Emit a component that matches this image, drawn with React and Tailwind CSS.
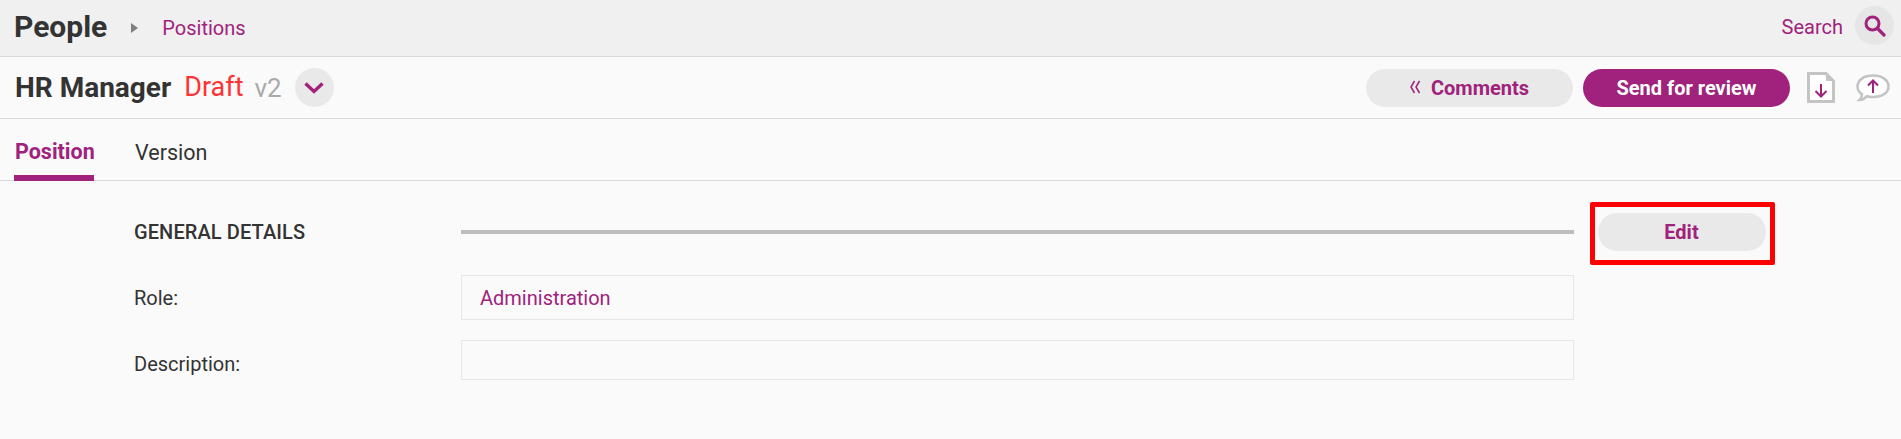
import React from "react";

const Chevron = () => (
  <svg width="20" height="12" viewBox="0 0 20 12" fill="none" stroke="#a0227c" strokeWidth="3.4">
    <path d="M1.5 1.5 L10 9.5 L18.5 1.5" />
  </svg>
);

const Search = () => (
  <svg width="22" height="22" viewBox="0 0 22 22" fill="none" stroke="#a0227c">
    <circle cx="8.5" cy="8.5" r="6.5" strokeWidth="3" />
    <path d="M13.5 13.5 L20 20" strokeWidth="3.2" strokeLinecap="round" />
  </svg>
);

const DoubleLeft = () => (
  <svg width="10" height="14" viewBox="0 0 10 14" fill="none" stroke="#a0227c" strokeWidth="1.5">
    <path d="M4.5 1 L1 7 L4.5 13 M9.5 1 L6 7 L9.5 13" />
  </svg>
);

const DocDown = () => (
  <svg width="28" height="31" viewBox="0 0 28 31" fill="none">
    <path d="M1.5 1.5 H19 L26.5 9 V29.5 H1.5 Z" fill="#fff" stroke="#c4c4c4" strokeWidth="3" />
    <path d="M19 1.5 V9 H26.5 Z" fill="#c4c4c4" />
    <path d="M14 12 V24 M8.5 19 L14 24.5 L19.5 19" stroke="#a0227c" strokeWidth="2" />
  </svg>
);

const ChatUp = () => (
  <svg width="34" height="28" viewBox="0 0 34 28" fill="none">
    <path d="M17 1.5 C26 1.5 32.5 6 32.5 12.5 C32.5 19 26 23 17 23 C14.5 23 12.5 22.7 11 22.2 C9 24.5 6.5 26 3.5 26 C5 24.5 6 22.5 6 20.3 C3 18.3 1.5 15.6 1.5 12.5 C1.5 6 8 1.5 17 1.5 Z" fill="#fff" stroke="#c4c4c4" strokeWidth="2.6" />
    <path d="M17 19 V7 M12 11.5 L17 6.5 L22 11.5" stroke="#a0227c" strokeWidth="2" />
  </svg>
);

export default function App() {
  return (
    <div className="min-h-screen bg-[#fafafa] text-[#333333] font-['Roboto',sans-serif] text-[20px]">
      <header className="h-[57px] bg-[#f0f0f0] border-b border-[#d9d9d9] flex items-center pl-[15px] pr-[7px]">
        <span className="text-[30px] font-bold leading-none -mt-[3px] -ml-px">People</span>
        <span className="ml-[24px] w-0 h-0 border-y-[5px] border-y-transparent border-l-[7px] border-l-[#808080]" />
        <span className="ml-[24px] text-[#a0227c]">Positions</span>
        <span className="ml-auto text-[#a0227c] -mt-[2px]">Search</span>
        <span className="ml-[12px] w-[39px] h-[39px] rounded-full bg-[#e6e6e6] flex items-center justify-center -mt-[5px]">
          <Search />
        </span>
      </header>

      <div className="h-[62px] border-b border-[#d9d9d9] flex items-center pl-[15px] pr-[11px]">
        <span className="text-[28px] font-bold leading-none">HR Manager</span>
        <span className="ml-[13px] text-[27px] leading-none text-[#ff3333]">Draft</span>
        <span className="ml-[11px] text-[26px] leading-none text-[#aaaaaa]">v2</span>
        <span className="ml-[13px] w-[39px] h-[39px] rounded-full bg-[#e9e9e9] flex items-center justify-center">
          <Chevron />
        </span>
        <button className="ml-auto w-[207px] h-[38px] rounded-full bg-[#e9e9e9] text-[#a0227c] font-bold flex items-center justify-center">
          <span className="mr-[11px] flex -mt-[2px]"><DoubleLeft /></span>
          Comments
        </button>
        <button className="ml-[10px] w-[207px] h-[38px] rounded-full bg-[#a0227c] text-white font-bold">
          Send for review
        </button>
        <span className="ml-[17px] flex"><DocDown /></span>
        <span className="ml-[21px] flex"><ChatUp /></span>
      </div>

      <nav className="h-[62px] border-b border-[#d9d9d9] flex pl-[14px] text-[21.5px]">
        <span className="w-[80px] h-[62px] border-b-[6px] border-[#a0227c] text-[#a0227c] font-bold flex items-center pt-[10px] pl-px whitespace-nowrap">Position</span>
        <span className="ml-[41px] flex items-center pt-[8px]">Version</span>
      </nav>

      <main className="pl-[134px] pt-[21px]">
        <div className="flex items-center h-[63px]">
          <span className="w-[327px] font-medium tracking-[0.1px] -mt-[4px]">GENERAL DETAILS</span>
          <span className="w-[1113px] h-[4px] bg-[#bdbdbd] -mt-[3px]" />
          <span className="ml-[16px] -mr-px w-[185px] h-[63px] border-[5px] border-[#ff0000] rounded-[2px] flex items-center justify-center">
            <button className="w-[168px] h-[38px] -ml-[2px] rounded-full bg-[#e9e9e9] text-[#a0227c] font-bold -mt-[3px]">Edit</button>
          </span>
        </div>
        <div className="flex items-center mt-[10px]">
          <span className="w-[327px]">Role:</span>
          <span className="w-[1113px] h-[45px] border border-[#e6e6e6] pl-[18px] flex items-center text-[#a0227c]">Administration</span>
        </div>
        <div className="flex items-center mt-[20px]">
          <span className="w-[327px] pt-[7px]">Description:</span>
          <span className="w-[1113px] h-[40px] border border-[#e6e6e6]" />
        </div>
      </main>
    </div>
  );
}
